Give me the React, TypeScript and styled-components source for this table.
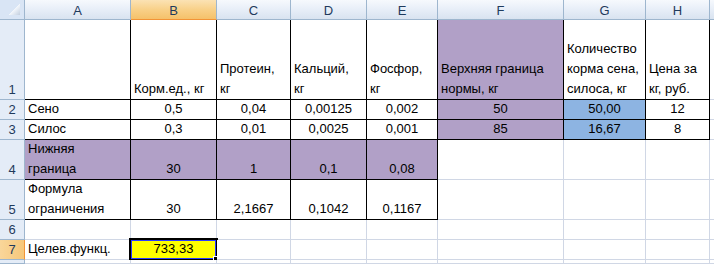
import { Fragment } from 'react'
import styled, { createGlobalStyle, css } from 'styled-components'

const GlobalStyle = createGlobalStyle`
  html, body {
    margin: 0;
    padding: 0;
    background: #ffffff;
  }
  body {
    font-family: "Liberation Sans", Arial, sans-serif;
    overflow: hidden;
  }
`

const GRID = '#d0d7e5'
const HEADER_LINE = '#9eb6ce'

type Fill = 'none' | 'purple' | 'blue' | 'yellow'
type Align = 'left' | 'center'

const fills: Record<Fill, string> = {
  none: '#ffffff',
  purple: '#b1a0c7',
  blue: '#8db4e2',
  yellow: '#ffff00',
}

const columns = ['A', 'B', 'C', 'D', 'E', 'F', 'G', 'H', 'I']
const colWidths = [25, 106, 86, 74, 76, 71, 126, 82, 64]
const rowHeights = [20, 80, 20, 20, 40, 40, 20, 20]

interface CellData {
  text?: string
  align?: Align
  fill?: Fill
}

const L = (text: string, fill: Fill = 'none'): CellData => ({ text, align: 'left', fill })
const N = (text: string, fill: Fill = 'none'): CellData => ({ text, align: 'center', fill })
const E: CellData = {}

const sheet: CellData[][] = [
  [
    E,
    L('Корм.ед., кг'),
    L('Протеин,\nкг'),
    L('Кальций,\nкг'),
    L('Фосфор,\nкг'),
    L('Верхняя граница\nнормы, кг', 'purple'),
    L('Количество\nкорма сена,\nсилоса, кг'),
    L('Цена за\nкг, руб.'),
    E,
  ],
  [L('Сено'), N('0,5'), N('0,04'), N('0,00125'), N('0,002'), N('50', 'purple'), N('50,00', 'blue'), N('12'), E],
  [L('Силос'), N('0,3'), N('0,01'), N('0,0025'), N('0,001'), N('85', 'purple'), N('16,67', 'blue'), N('8'), E],
  [
    L('Нижняя\nграница', 'purple'),
    N('30', 'purple'),
    N('1', 'purple'),
    N('0,1', 'purple'),
    N('0,08', 'purple'),
    E,
    E,
    E,
    E,
  ],
  [L('Формула\nограничения'), N('30'), N('2,1667'), N('0,1042'), N('0,1167'), E, E, E, E],
  [E, E, E, E, E, E, E, E, E],
  [L('Целев.функц.'), N('733,33', 'yellow'), E, E, E, E, E, E, E],
]

// table borders: A..E on rows 1-5, F..H on rows 1-3
const bordered = (r: number, c: number) =>
  (r >= 0 && r <= 4 && c >= 0 && c <= 4) || (r >= 0 && r <= 2 && c >= 5 && c <= 7)

const ACTIVE_COL = 1
const ACTIVE_ROW = 6

const Sheet = styled.div`
  display: grid;
  grid-template-columns: ${colWidths.map((w) => `${w}px`).join(' ')} 1fr;
  grid-template-rows: ${rowHeights.map((h) => `${h}px`).join(' ')} 1fr;
  width: 714px;
  height: 264px;
  font-size: 13px;
  color: #000000;
`

const headerBg = css<{ $active?: boolean }>`
  background: ${(p) =>
    p.$active
      ? 'linear-gradient(#fbe2b4, #f8cf85 55%, #f5c16a)'
      : 'linear-gradient(#f6f9fd, #e6edf7 55%, #d9e3f0)'};
`

const Corner = styled.div`
  box-sizing: border-box;
  position: relative;
  background: #d9e5f5;
  border-right: 1px solid ${HEADER_LINE};
  border-bottom: 1px solid ${HEADER_LINE};

  &::after {
    content: '';
    position: absolute;
    right: 4px;
    bottom: 4px;
    width: 11px;
    height: 11px;
    background: linear-gradient(135deg, transparent 50%, #f2f6fb 50%, #c3cfdf);
  }
`

const ColHeader = styled.div<{ $active?: boolean }>`
  box-sizing: border-box;
  display: flex;
  align-items: center;
  justify-content: center;
  ${headerBg};
  border-right: 1px solid ${HEADER_LINE};
  border-bottom: 1px solid ${(p) => (p.$active ? '#f29436' : HEADER_LINE)};
  color: #1f3a5c;
  font-size: 13px;
  padding-top: 1px;
`

const RowHeader = styled.div<{ $active?: boolean }>`
  box-sizing: border-box;
  display: flex;
  align-items: flex-end;
  justify-content: center;
  background: ${(p) => (p.$active ? 'linear-gradient(90deg, #f9d69a, #f6c77a)' : '#e4ecf7')};
  border-right: 1px solid ${(p) => (p.$active ? '#f29436' : HEADER_LINE)};
  border-bottom: 1px solid ${HEADER_LINE};
  color: #1f3a5c;
  font-size: 13px;
  line-height: 19px;
`

const Cell = styled.div<{
  $fill: Fill
  $align: Align
  $right: boolean
  $bottom: boolean
}>`
  box-sizing: border-box;
  position: relative;
  display: flex;
  flex-direction: column;
  justify-content: flex-end;
  align-items: ${(p) => (p.$align === 'center' ? 'center' : 'flex-start')};
  padding: 0 3px;
  background: ${(p) => fills[p.$fill]};
  border-right: 1px solid ${(p) => (p.$right ? '#000000' : GRID)};
  border-bottom: 1px solid ${(p) => (p.$bottom ? '#000000' : GRID)};
  white-space: pre;
  line-height: 20px;
  overflow: visible;
`

const Line = styled.span`
  display: block;
  height: 20px;
`

const Selection = styled.div`
  position: absolute;
  left: -2px;
  top: -2px;
  right: -2px;
  bottom: -2px;
  border: 2px solid #000000;
  box-shadow: inset 0 0 0 1px #2b3cff;
  pointer-events: none;

  &::after {
    content: '';
    position: absolute;
    right: -4px;
    bottom: -4px;
    width: 5px;
    height: 5px;
    background: #000000;
    border: 1px solid #ffffff;
  }
`

function GridCell({ data, r, c }: { data: CellData; r: number; c: number }) {
  const selected = r === ACTIVE_ROW && c === ACTIVE_COL
  return (
    <Cell
      $fill={data.fill ?? 'none'}
      $align={data.align ?? 'left'}
      $right={bordered(r, c) || bordered(r, c + 1)}
      $bottom={bordered(r, c) || bordered(r + 1, c)}
    >
      {data.text?.split('\n').map((line, i) => <Line key={i}>{line}</Line>)}
      {selected && <Selection />}
    </Cell>
  )
}

export default function App() {
  const extraRow = sheet.length
  return (
    <>
      <GlobalStyle />
      <Sheet>
        <Corner />
        {columns.map((col, c) => (
          <ColHeader key={col} $active={c === ACTIVE_COL}>
            {c < columns.length - 1 ? col : ''}
          </ColHeader>
        ))}

        {sheet.map((row, r) => (
          <Fragment key={`row-${r}`}>
            <RowHeader $active={r === ACTIVE_ROW}>{r + 1}</RowHeader>
            {row.map((data, c) => (
              <GridCell key={`${r}-${c}`} data={data} r={r} c={c} />
            ))}
          </Fragment>
        ))}

        <RowHeader />
        {columns.map((col, c) => (
          <GridCell key={`x-${col}`} data={E} r={extraRow} c={c} />
        ))}
      </Sheet>
    </>
  )
}
